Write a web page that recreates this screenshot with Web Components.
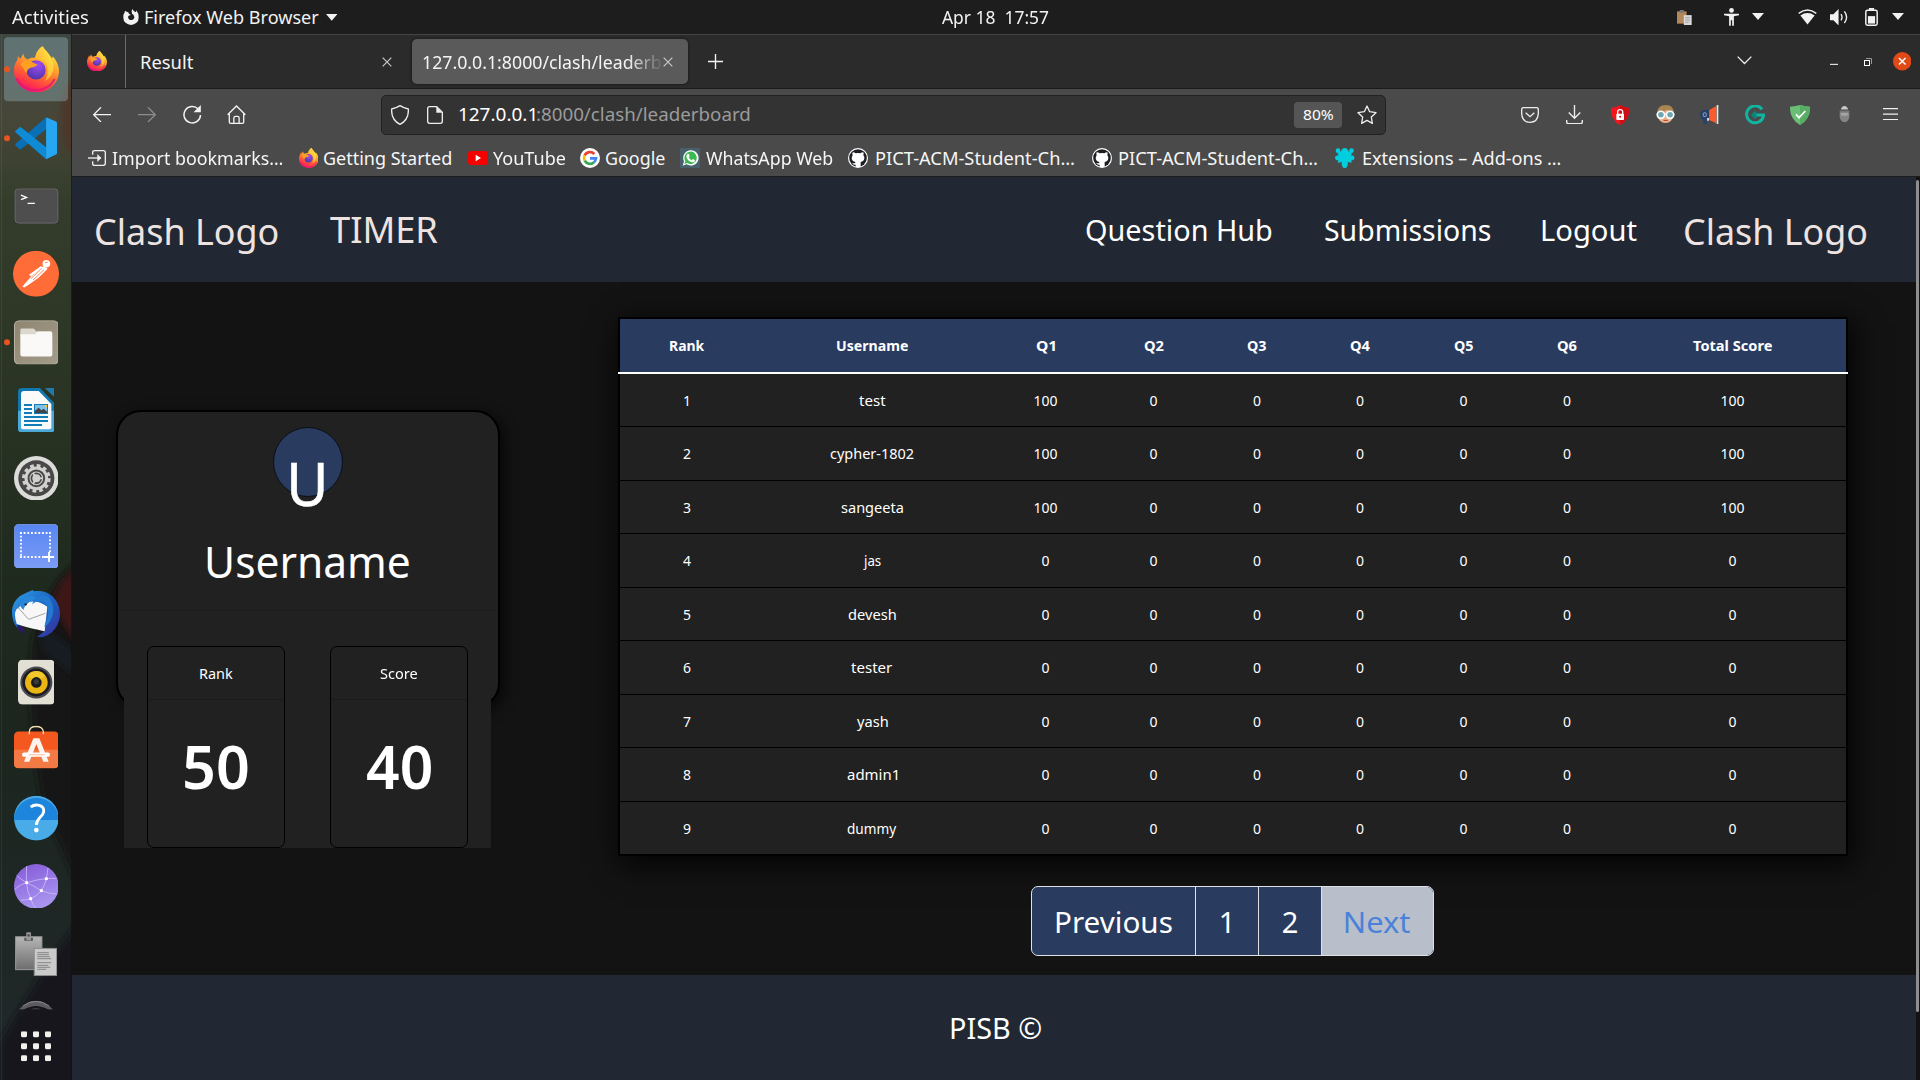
<!DOCTYPE html>
<html lang="en">
<head>
<meta charset="utf-8">
<title>Leaderboard</title>
<style>
html,body{margin:0;height:100%;background:#131313;overflow:hidden}
body{font-family:"Noto Sans","Open Sans",sans-serif;color:#fff}
</style>
</head>
<body>
<desktop-shell>
  <top-panel slot="panel"></top-panel>
  <app-dock slot="dock"></app-dock>
  <browser-window>
    <tab-strip slot="chrome"></tab-strip>
    <nav-toolbar slot="chrome"></nav-toolbar>
    <bookmark-bar slot="chrome"></bookmark-bar>
    <leader-page></leader-page>
  </browser-window>
</desktop-shell>
<script>
const ICONS = {
firefox:['0 0 135 138',`<defs><linearGradient id="a" x1=".75" y1="0" x2=".3" y2="1"><stop offset="0" stop-color="#fff44f"/><stop offset=".3" stop-color="#ffb62e"/><stop offset=".6" stop-color="#ff6a30"/><stop offset=".85" stop-color="#ff2f4e"/><stop offset="1" stop-color="#e8187c"/></linearGradient><radialGradient id="b" cx=".6" cy=".25" r=".8"><stop offset="0" stop-color="#a14cf5"/><stop offset="1" stop-color="#4a35a5"/></radialGradient><linearGradient id="c" x1="1" y1="0" x2="0" y2="1"><stop offset="0" stop-color="#fff04a"/><stop offset="1" stop-color="#ff9a28"/></linearGradient></defs>
<path fill="url(#a)" d="M86 0C91 10 104 20 111 33C113 36 115 38 116 30C127 42 135 58 135 74C135 110 105 138 67 138C29 138 0 110 0 74C0 60 4 48 10 42L12 30L19 38L28 22C29 32 34 38 42 40C52 30 62 38 64 32C66 18 76 6 86 0Z"/>
<path fill="url(#c)" d="M86 0C91 12 106 22 113 38C124 62 118 92 92 104C104 88 104 62 92 46C84 38 72 40 64 34C66 18 76 6 86 0Z"/>
<circle cx="66" cy="71" r="29" fill="url(#b)"/>
<path fill="#ffa023" d="M19 56C24 44 38 38 50 44C56 48 62 52 70 54C68 60 60 63 52 64C44 66 38 72 38 80C30 74 30 64 19 56Z"/>
<path fill="none" stroke="#e2147a" stroke-width="7" opacity=".75" d="M8 96C22 128 60 138 88 128C104 122 116 110 122 98"/>`],
vscode:['0 0 127 127',`<path fill="#0a6fb5" d="M0 84L14 97Q17 98 19 96L94 36V0L2 80Q0 82 0 84Z"/><path fill="#0f8ad4" d="M0 42L14 30Q17 28 19 31L94 91V127L2 46Q0 44 0 42Z"/><path fill="#27a7f2" d="M94 0L124 13Q127 15 127 18V108Q127 112 124 113L94 127Z"/>`],
terminal:['0 0 136 110',`<rect x="1" y="1" width="134" height="108" rx="12" fill="#2b2b2b"/><rect x="3" y="2" width="130" height="104" rx="10" fill="#4e4e4e" stroke="#7d7d7d" stroke-width="2"/><path d="M21 21L38 28L21 35" fill="none" stroke="#fff" stroke-width="4"/><path d="M41 46H63" stroke="#fff" stroke-width="3.5"/>`],
postman:['0 0 138 138',`<circle cx="69" cy="69" r="69" fill="#ff6c37"/><circle cx="100" cy="39" r="11.5" fill="#fff"/><path fill="#fff" d="M92 45L104 54L76 82L48 101L34 110L28 108L36 98L52 80Z"/><path d="M96 36L104 34M86 52L54 84M93 57L60 88" stroke="#ff6c37" stroke-width="2.5"/><path fill="#fff" d="M48 72L84 46L88 50L54 77Z"/>`],
files:['0 0 134 134',`<defs><linearGradient id="a" x1="0" y1="0" x2="1" y2="1"><stop offset="0" stop-color="#8f8671"/><stop offset="1" stop-color="#a39b8a"/></linearGradient></defs><rect x="1.5" y="1.5" width="131" height="131" rx="14" fill="url(#a)" stroke="#b9b1a1" stroke-width="3"/><path d="M19 40V29Q19 25 23 25H57Q60 25 62 28L67 34H113V50H19Z" fill="#dcd8ce"/><path d="M19 42H64L70 34H109Q115 34 115 40V103Q115 109 109 109H25Q19 109 19 103Z" fill="#faf9f7"/>`],
writer:['0 0 110 134',`<path d="M12 0H66L110 46V122Q110 133 98 133H12Q0 133 0 122V12Q0 0 12 0Z" fill="#1277ae"/><path d="M0 68H110V122Q110 133 98 133H12Q0 133 0 122Z" fill="#4aa9d8"/><path d="M18 9H62L100 48V118Q100 124 94 124H16Q9 124 9 118V18Q9 9 18 9Z" fill="#fafafa"/><path d="M80 0H106Q110 0 110 4V28Z" fill="#2378ab"/><path d="M18 51H42M18 63H42M18 75H42M18 87H90M18 99H90M18 111H72" stroke="#0e7db8" stroke-width="5.5"/><rect x="48" y="48" width="42" height="30" fill="#0e7db8"/><rect x="51" y="51" width="36" height="24" fill="#7ec2e8"/><path d="M51 75V68L62 59L70 67L77 62L87 71V75Z" fill="#444"/><path d="M78 51H87V60Z" fill="#ffc63a"/>`],
settings:['0 0 134 134',`<circle cx="67" cy="67" r="67" fill="#dcdcda"/><circle cx="67" cy="67" r="54" fill="#484848"/><circle cx="67" cy="67" r="38" fill="none" stroke="#d0d0ce" stroke-width="10" stroke-dasharray="11 8.9"/><circle cx="67" cy="67" r="31" fill="none" stroke="#d0d0ce" stroke-width="9"/><circle cx="67" cy="67" r="19" fill="none" stroke="#d0d0ce" stroke-width="3"/><path d="M67 67L86 67M67 67L57 51M67 67L57 84" stroke="#d0d0ce" stroke-width="6"/><circle cx="67" cy="67" r="12" fill="#d0d0ce"/>`],
shot:['0 0 134 134',`<defs><linearGradient id="a" x1="0" y1="0" x2="0" y2="1"><stop offset="0" stop-color="#5886f2"/><stop offset="1" stop-color="#7c9cf6"/></linearGradient></defs><rect x="1" y="1" width="132" height="132" rx="13" fill="url(#a)" stroke="#8eaaf8" stroke-width="2"/><path d="M18 27H110M108 24V86M21 24V102M18 99H92" stroke="#fff" stroke-width="5.5" stroke-dasharray="5.5 5.5" fill="none"/><path d="M90 99H120M105 84V114" stroke="#fff" stroke-width="5.5"/>`],
tbird:['0 0 144 142',`<defs><linearGradient id="a" x1="0" y1="0" x2="1" y2="1"><stop offset="0" stop-color="#2fa0e8"/><stop offset=".5" stop-color="#1a62c0"/><stop offset="1" stop-color="#3a2c9c"/></linearGradient></defs><path fill="url(#a)" d="M48 6L62 0L66 4C110 -4 144 30 144 72C144 104 122 136 88 142L74 140C88 134 94 126 100 120L20 104L38 128C10 118 0 92 0 66C0 44 12 26 28 16Z"/><path d="M28 46C50 30 80 30 106 50L98 124C70 118 30 108 14 102Q4 70 14 58Z" fill="#f7f7f8"/><path d="M16 50L50 88L100 70" fill="none" stroke="#777" stroke-width="2"/><path d="M26 50C24 24 50 12 74 22C62 34 42 36 34 60Z" fill="#2a86d8"/><path d="M60 44C70 30 104 26 108 60C112 80 96 100 98 112C126 90 132 50 112 24C96 8 70 16 60 44Z" fill="#2378cf"/><path d="M14 104C18 124 28 126 38 130L34 112Z" fill="#2c1769"/><circle cx="41" cy="43" r="3.5" fill="#222"/>`],
rhythm:['0 0 110 134',`<rect width="110" height="134" rx="13" fill="#e2dfd5"/><circle cx="55" cy="68" r="48" fill="#4a4a50"/><circle cx="55" cy="68" r="42" fill="#1c1c22"/><circle cx="55" cy="68" r="34" fill="#e9b613"/><path d="M55 68L28 47A34 34 0 0 1 82 47Z" fill="#f7d33c" opacity=".6"/><circle cx="55" cy="68" r="16" fill="#1b1b1b"/><circle cx="55" cy="66" r="8" fill="#3a3a3a"/>`],
software:['0 0 134 128',`<rect y="18" width="134" height="110" rx="13" fill="#f4581f"/><path d="M0 73H134V115Q134 128 121 128H13Q0 128 0 115Z" fill="#f47a45"/><path d="M46 26V18Q47 3 66 3Q86 3 88 18V26" fill="none" stroke="#f3dfae" stroke-width="4"/><path d="M58 38H76L104 109H88L67 56L46 109H30Z" fill="#fff" opacity=".92"/><rect x="24" y="81" width="84" height="13" rx="6.500" fill="#fff"/><path d="M44 88H92" stroke="#f9b89e" stroke-width="3"/>`],
help:['0 0 134 134',`<circle cx="67" cy="67" r="67" fill="#4aabe9"/><path d="M0 73A67 67 0 1 1 134 73Z" fill="#1e85dc"/><path d="M50 34C62 24 92 25 89 48C87 64 67 66 67 88" fill="none" stroke="#fff" stroke-width="8.500"/><circle cx="67" cy="103" r="7" fill="#fff"/>`],
net:['0 0 134 134',`<defs><linearGradient id="a" x1="0" y1="0" x2=".4" y2="1"><stop offset="0" stop-color="#8457d8"/><stop offset="1" stop-color="#a794ef"/></linearGradient></defs><circle cx="67" cy="67" r="67" fill="url(#a)"/><g fill="none" stroke="#cdb9f5" stroke-width="2.500"><path d="M38 6Q36 30 38 56Q38 80 50 104Q56 124 66 133M8 34Q22 48 38 56Q60 66 82 80Q106 90 130 90M2 76Q20 60 38 56Q70 46 97 44Q116 42 128 44M102 12Q100 28 97 44Q92 64 82 80Q70 96 50 104Q30 110 20 108"/></g><g fill="#fff"><circle cx="38" cy="56" r="5"/><circle cx="97" cy="44" r="5"/><circle cx="82" cy="80" r="5"/><circle cx="50" cy="104" r="5"/></g>`],
clip:['0 0 128 132',`<defs><linearGradient id="a" x1="0" y1="0" x2="0" y2="1"><stop offset="0" stop-color="#b5b5b5"/><stop offset="1" stop-color="#6e6e6e"/></linearGradient></defs><rect x="2" y="14" width="79" height="99" fill="url(#a)" stroke="#9b9b9b" stroke-width="3"/><rect x="28" y="17" width="26" height="9" fill="#555"/><rect x="34" y="0" width="14" height="24" fill="#9a9a9a"/><circle cx="41" cy="10" r="4" fill="#555"/><rect x="58" y="49" width="68" height="82" fill="#cacaca" stroke="#8b8b8b" stroke-width="3"/><path d="M67 62H102M67 68H102M67 74H105M67 80H109M67 92H109M67 100H100M67 106H106M67 112H94" stroke="#858585" stroke-width="3"/>`],
peek:['0 0 104 27',`<path d="M0 27Q24 0 52 0Q80 0 104 27H90Q70 16 52 16Q34 16 14 27Z" fill="#5c5c60"/><path d="M12 16Q30 2 52 2Q74 2 92 16" fill="none" stroke="#8a8a8c" stroke-width="3"/><path d="M36 27Q50 18 68 27Z" fill="#3c3c40"/>`],
grid:['0 0 90 90',`<g fill="#f2f1ee"><rect width="18" height="18" rx="4"/><rect x="36" width="18" height="18" rx="4"/><rect x="72" width="18" height="18" rx="4"/><rect y="36" width="18" height="18" rx="4"/><rect x="36" y="36" width="18" height="18" rx="4"/><rect x="72" y="36" width="18" height="18" rx="4"/><rect y="72" width="18" height="18" rx="4"/><rect x="36" y="72" width="18" height="18" rx="4"/><rect x="72" y="72" width="18" height="18" rx="4"/></g>`],
ffmono:['0 0 48 48',`<path fill="#f2f2f2" d="M28 0Q31 7 39 10L40 4Q48 14 47 26A23 22 0 0 1 1 26Q0 17 5 10L6 5L11 8Q17 8 18 14L24 18Q17 19 15 23Q16 33 25 33Q34 32 34 24Q33 17 27 14Q24 6 28 0Z"/>`],
tri:['0 0 34 20',`<path fill="#f2f2f2" d="M0 0H34L17 20Z"/>`],
clipS:['0 0 44 44',`<rect x="0" y="4" width="28" height="36" fill="#b2885a"/><rect x="8" y="0" width="12" height="8" fill="#777"/><rect x="20" y="15" width="23" height="29" fill="#d9d9d9"/><path d="M24 22H38M24 27H38M24 32H38M24 37H34" stroke="#999" stroke-width="2"/>`],
access:['0 0 44 54',`<g fill="#f2f2f2"><circle cx="22" cy="7" r="7"/><path d="M0 17H44V21L29 24V52H24V36H20V52H15V24L0 21Z"/></g>`],
wifi:['0 0 56 46',`<path fill="#f2f2f2" d="M7 19Q28 5 49 19L28 46Z"/><path d="M2 13Q28-7 54 13" fill="none" stroke="#f2f2f2" stroke-width="4"/>`],
vol:['0 0 54 48',`<path fill="#f2f2f2" d="M0 15H10L25 0V48L10 33H0Z"/><path d="M32 15Q38 24 32 33M42 7Q55 24 42 41" fill="none" stroke="#f2f2f2" stroke-width="4"/>`],
batt:['0 0 40 56',`<rect x="2.500" y="7" width="35" height="46" rx="5" fill="none" stroke="#f2f2f2" stroke-width="4.500"/><rect x="12" y="0" width="16" height="6" fill="#f2f2f2"/><rect x="9" y="25" width="22" height="23" fill="#f2f2f2"/>`],
x:['0 0 30 30',`<path d="M2 2L28 28M28 2L2 28" stroke="#c9c9c9" stroke-width="3.500"/>`],
plus:['0 0 44 44',`<path d="M22 0V44M0 22H44" stroke="#f4f4f4" stroke-width="4"/>`],
chev:['0 0 46 26',`<path d="M2 2L23 23L44 2" fill="none" stroke="#f0f0f0" stroke-width="4"/>`],
min:['0 0 24 24',`<path d="M0 19H24" stroke="#fff" stroke-width="3"/>`],
max:['0 0 24 24',`<rect x="1.500" y="7.500" width="15" height="15" fill="none" stroke="#fff" stroke-width="3"/><path d="M6 1.500H22.500V18" fill="none" stroke="#999" stroke-width="3"/>`],
close:['0 0 56 56',`<circle cx="28" cy="28" r="28" fill="#df4a16"/><path d="M18 18L38 38M38 18L18 38" stroke="#fff" stroke-width="4.500"/>`],
back:['0 0 54 46',`<path d="M24 1L2 23L24 45M2 23H54" fill="none" stroke="#f4f4f4" stroke-width="4"/>`],
fwd:['0 0 54 46',`<path d="M30 1L52 23L30 45M52 23H0" fill="none" stroke="#8d8d8d" stroke-width="4"/>`],
reload:['0 0 56 56',`<path d="M46 12A25 25 0 1 0 53 30" fill="none" stroke="#f4f4f4" stroke-width="4.500"/><path d="M54 0V22H32Z" fill="#f4f4f4"/>`],
home:['0 0 58 58',`<path d="M2 30L29 3L56 30M7 26V52Q7 56 11 56H47Q51 56 51 52V26M21 56V40Q21 35 26 35H32Q37 35 37 40V56" fill="none" stroke="#f4f4f4" stroke-width="4"/>`],
shield:['0 0 54 60',`<path d="M27 2Q38 9 52 12Q54 44 27 58Q0 44 2 12Q16 9 27 2Z" fill="none" stroke="#ededed" stroke-width="4" stroke-linejoin="round"/>`],
doc:['0 0 48 54',`<path d="M8 2H29L46 19V46Q46 52 40 52H8Q2 52 2 46V8Q2 2 8 2Z" fill="none" stroke="#ededed" stroke-width="4"/><path d="M28 2L46 20H28Z" fill="#ededed"/>`],
star:['0 0 60 58',`<path d="M30 3L38 20L57 23L43 36L46 55L30 46L14 55L17 36L3 23L22 20Z" fill="none" stroke="#ededed" stroke-width="4" stroke-linejoin="round"/>`],
pocket:['0 0 54 48',`<path d="M7 2H47Q52 2 52 8V20Q50 46 27 46Q4 46 2 20V8Q2 2 7 2Z" fill="none" stroke="#ededed" stroke-width="4"/><path d="M14 17L27 29L40 17" fill="none" stroke="#ededed" stroke-width="4"/>`],
down:['0 0 50 58',`<path d="M25 0V38M8 22L25 39L42 22M2 44V50Q2 55 8 55H42Q48 55 48 50V44" fill="none" stroke="#ededed" stroke-width="4"/>`],
lock:['0 0 54 60',`<path d="M27 0Q38 8 54 9Q56 45 27 60Q-2 45 0 9Q16 8 27 0Z" fill="#f4141c"/><path d="M27 0Q38 8 54 9Q56 45 27 60Z" fill="#d10d14"/><rect x="16" y="26" width="23" height="19" rx="2" fill="#fff"/><path d="M20 27V20Q20 14 27.500 14Q35 14 35 20V27" fill="none" stroke="#fff" stroke-width="4"/><circle cx="27.500" cy="35" r="3" fill="#d10d14"/>`],
face:['0 0 58 56',`<ellipse cx="29" cy="31" rx="24" ry="24" fill="#e9b28a"/><path d="M3 27Q3 0 30 0Q55 0 55 27Q40 24 34 14Q24 24 3 27Z" fill="#a98552"/><path d="M2 28H56" stroke="#f7f7f7" stroke-width="4"/><circle cx="15" cy="30" r="11" fill="#6ea5ae" stroke="#fff" stroke-width="5"/><circle cx="43" cy="30" r="11" fill="#6ea5ae" stroke="#fff" stroke-width="5"/><path d="M23 47H36" stroke="#b23c2a" stroke-width="3"/>`],
mega:['0 0 58 60',`<path d="M28 14V48L20 46L22 60H12L8 44Q0 40 0 30Q0 18 10 16Z" fill="#29406a"/><path d="M28 15L50 3V56L28 46Z" fill="#fb5c2d"/><rect x="51" y="0" width="5" height="60" fill="#dfe9f2"/><rect x="10" y="24" width="9" height="11" rx="2" fill="none" stroke="#aab6ca" stroke-width="2.500"/><rect x="22" y="40" width="5" height="8" fill="#fff"/>`],
gram:['0 0 60 60',`<path d="M51 13A25.500 25.500 0 1 0 55.500 32" fill="none" stroke="#0fb5a0" stroke-width="9"/><path d="M32 30H60" stroke="#0fb5a0" stroke-width="9" fill="none"/><path d="M18 30L30 17L37 25H34V35H37L30 43Z" fill="#08877b"/>`],
guard:['0 0 60 60',`<path d="M30 0Q42 4 60 5Q62 42 30 60Q-2 42 0 5Q18 4 30 0Z" fill="#69bf75"/><path d="M30 0Q42 4 60 5Q62 42 30 60Z" fill="#58ad65"/><path d="M18 28L27 38L46 18" fill="none" stroke="#fff" stroke-width="5"/>`],
bug:['0 0 34 50',`<path d="M6 11Q8 0 17 0Q26 0 28 11Z" fill="#c8c8c8"/><rect x="2" y="14" width="30" height="5" fill="#777"/><path d="M2 20H32V32Q30 50 17 50Q4 50 2 32Z" fill="#858585"/><path d="M4 20H30L26 30H8Z" fill="#a4a4a4"/>`],
menu:['0 0 46 38',`<path d="M0 2H46M0 19H46M0 36H46" stroke="#f0f0f0" stroke-width="4"/>`],
imp:['0 0 54 48',`<path d="M14 14V7Q14 2 20 2H46Q52 2 52 8V40Q52 46 46 46H20Q14 46 14 41V34" fill="none" stroke="#f0f0f0" stroke-width="4"/><path d="M0 24H38" stroke="#f0f0f0" stroke-width="4"/><path d="M28 12L40 24L28 36Z" fill="#f0f0f0"/>`],
yt:['0 0 60 42',`<rect width="60" height="42" rx="9" fill="#f60000"/><path d="M23 11L39 21L23 31Z" fill="#fff"/>`],
google:['0 0 60 60',`<circle cx="30" cy="30" r="30" fill="#fff"/><g fill="none" stroke-width="8"><path d="M43 18A18 18 0 0 0 14 22" stroke="#ea4335"/><path d="M14 22A18 18 0 0 0 14 38" stroke="#fbbc05"/><path d="M14 38A18 18 0 0 0 42 43" stroke="#34a853"/><path d="M42 43Q47 38 48 31H30" stroke="#4285f4"/></g>`],
wa:['0 0 60 60',`<rect width="60" height="60" fill="#48606c"/><path d="M8 53L12 40A23 23 0 1 1 20 49Z" fill="#fff"/><path d="M13 48L16 39A18.500 18.500 0 1 1 22 45Z" fill="#3cb950"/><path d="M22 18L27 18L29 25L26 28Q29 34 35 37L39 33L45 37Q44 44 37 43Q20 39 19 24Z" fill="#fff"/>`],
gh:['0 0 60 60',`<circle cx="30" cy="30" r="30" fill="#fff"/><circle cx="30" cy="30" r="26.500" fill="#1b1f23"/><path d="M14 13Q20 13 23 16Q30 14 37 16Q40 13 46 13Q48 18 46 22Q50 26 49 31Q48 41 38 42V57H23V50Q15 52 12 44Q18 47 22 44V42Q12 40 11 31Q11 26 14 22Q12 18 14 13Z" fill="#fff"/>`],
ext:['0 0 58 60',`<g fill="#00cddd"><circle cx="9" cy="8" r="7"/><circle cx="49" cy="8" r="7"/><path d="M8 14L18 10L20 5Q22 0 29 0Q36 0 38 5L40 10L50 14L48 23Q58 21 58 30Q57 37 48 37L50 44L38 42L38 50Q36 60 29 60Q22 60 20 50L20 42L8 44L10 37Q1 37 0 30Q0 21 10 23Z"/></g>`]
};
const el = (name, html, extra) => customElements.define(name, class extends HTMLElement {
  constructor(){ super(); this.attachShadow({mode:'open'}); }
  connectedCallback(){ if(this.done) return; this.done = true;
    this.shadowRoot.innerHTML = typeof html === 'function' ? html(this) : html;
    if(extra) extra(this); }
});
const pen = document.createElement('canvas').getContext('2d');

/* A single line of text whose ink is stretched to the width "w" at font size "s". */
el('fit-text', h => `<style>:host{display:block;flex:none;white-space:pre;line-height:1.3;font-size:${h.getAttribute('s')||17.5}px}span{display:inline-block;transform-origin:0 50%}</style><span><slot></slot></span>`, h => {
  const s = h.getAttribute('s')||17.5, w = +h.getAttribute('w'), dy = +(h.getAttribute('dy')||0);
  const span = h.shadowRoot.querySelector('span');
  if(!w){ span.style.transform = `translateY(${dy}px)`; return; }
  pen.font = `${h.getAttribute('b')||400} ${s}px "Noto Sans"`;
  h.style.fontWeight = h.getAttribute('b')||400;
  const m = pen.measureText(h.textContent), k = w/(m.actualBoundingBoxLeft+m.actualBoundingBoxRight);
  h.style.width = w+'px';
  span.style.transform = `translate(${m.actualBoundingBoxLeft*k}px,${dy}px) scaleX(${k})`;
});
el('ui-icon', h => { const [vb, body] = ICONS[h.getAttribute('n')], v = vb.split(' '), w = +(h.getAttribute('w') || v[2]/3);
  return `<style>:host{display:block;flex:none;width:${w}px;height:${w*v[3]/v[2]}px}svg{display:block;width:100%;height:100%}</style><svg viewBox="${vb}">${body}</svg>`; });

el('desktop-shell', `<style>:host{display:grid;grid-template:34px 1046px/72px 1848px;width:1920px;height:1080px;overflow:hidden}
.p{grid-column:1/3}</style><div class="p"><slot name="panel"></slot></div><slot name="dock"></slot><slot></slot>`);

const at = (list) => { let x = 0, out = ''; for(const [pos, w, node] of list){ out += `<div class="i" style="margin-left:${(pos-x).toFixed(1)}px;width:${w}px">${node}</div>`; x = pos+w; } return out; };
const bar = `.i{flex:none;display:flex;justify-content:flex-start;align-items:center}`;
const T = (x,w,t,s=17.5,dy=0,b='') => [x,w,`<fit-text w="${w}" s="${s}" dy="${dy}" ${b}>${t}</fit-text>`];
const I = (x,w,n,dy=0) => [x,w,`<ui-icon n="${n}" w="${w}" style="margin-top:${dy}px"></ui-icon>`];

el('top-panel', `<style>:host{display:flex;align-items:center;height:34px;background:#1d1d1d;color:#f2f2f2}${bar}</style>`+at([
 T(12,76.500,'Activities'),I(123,16,'ffmono'),T(145,173.500,'Firefox Web Browser'),I(325.500,11.500,'tri',1),
 T(942,107,'Apr 18\u00a0 17:57'),I(1676.500,15,'clipS'),I(1723.500,15,'access'),I(1752,12,'tri'),I(1797.500,19,'wifi'),I(1830,18.500,'vol'),I(1864.500,13,'batt'),I(1892,12,'tri')]));

el('tab-strip', `<style>:host{display:flex;align-items:center;height:55px;box-sizing:border-box;border-top:1px solid #434343;border-bottom:1px solid #1b1b1b;background:#2b2b2b;color:#f4f4f4}
${bar}.pin{width:53px;height:53px;border-right:1px solid #6a6a6a;display:flex;align-items:center}.pin ui-icon{margin:-1px 0 0 15px}
.tab{display:flex;align-items:center;box-sizing:border-box;height:45px;width:276px;padding-left:11px;border-radius:5px;background:#5a5a5a;box-shadow:0 0 3px #111}
.fade{width:239px;overflow:hidden;-webkit-mask:linear-gradient(90deg,#000 205px,transparent 241px)}</style>
<div class="pin"><ui-icon n="firefox" w="20"></ui-icon></div>
<fit-text w="52" style="margin-left:15px" dy="1">Result</fit-text><ui-icon n="x" w="10" style="margin-left:188.500px"></ui-icon>
<div class="tab" style="margin-left:20px"><div class="fade"><fit-text w="238" dy="1">127.0.0.1:8000/clash/leaderb</fit-text></div><ui-icon n="x" w="10" style="margin-left:1px"></ui-icon></div>
<ui-icon n="plus" w="15" style="margin-left:20px"></ui-icon>
<ui-icon n="chev" w="15" style="margin-left:1014px;margin-top:-2px"></ui-icon>
<ui-icon n="min" w="8" style="margin-left:78px"></ui-icon><ui-icon n="max" w="8" style="margin-left:26px"></ui-icon><ui-icon n="close" w="18.500" style="margin-left:21px"></ui-icon>`);

el('nav-toolbar', `<style>:host{display:flex;align-items:center;height:51px;background:#4a4a4a;color:#fff}${bar}
.url{flex:none;box-sizing:border-box;display:flex;align-items:center;width:1005px;height:40px;margin-left:135px;border:1px solid #222;border-radius:5px;background:#333}
.zoom{display:flex;align-items:center;justify-content:center;width:48px;height:26px;margin-left:544px;border-radius:4px;background:#555}
.path{color:#9b9b9b}.ext{display:flex;align-items:center}</style>`+at([I(21,18,'back'),I(66,18,'fwd'),I(111,18.500,'reload'),I(155,19,'home')])+
`<div class="url"><ui-icon n="shield" w="18" style="margin-left:9px"></ui-icon><ui-icon n="doc" w="16" style="margin-left:18px"></ui-icon>
<fit-text w="76" s="17.5" style="margin-left:16px">127.0.0.1</fit-text><fit-text class="path" w="213" s="17.5" style="margin-left:2px">:8000/clash/leaderboard</fit-text>
<div class="zoom"><fit-text w="30" s="14" dy=".5">80%</fit-text></div><ui-icon n="star" w="20" style="margin-left:15px"></ui-icon></div>`+
`<div class="ext">`+at([I(135,18,'pocket'),I(180,17,'down'),I(225,18,'lock'),I(269.500,19,'face'),I(314,19,'mega'),I(359,20,'gram'),I(404,20,'guard'),I(453,11,'bug'),I(497,15,'menu',-1)])+`</div>`);

el('bookmark-bar', `<style>:host{display:flex;align-items:center;height:37px;box-sizing:border-box;border-bottom:1px solid #1d1d1d;background:#4a4a4a;color:#f6f6f6}${bar}</style>`+at([
 I(16,18,'imp'),T(40,170.500,'Import bookmarks…'),I(226.500,19.500,'firefox'),T(252,127.500,'Getting Started'),I(396,20,'yt'),T(420.500,72,'YouTube'),
 I(508,20,'google'),T(533.500,58.500,'Google'),I(608,20,'wa'),T(634,126.500,'WhatsApp Web'),I(776,20,'gh'),T(803.500,198,'PICT-ACM-Student-Ch…'),
 I(1020,20,'gh'),T(1047,198,'PICT-ACM-Student-Ch…'),I(1263,19.500,'ext'),T(1291,197.500,'Extensions – Add-ons …')]));

el('browser-window', `<style>:host{display:flex;flex-direction:column;width:1848px;height:1046px}</style><slot name="chrome"></slot><slot></slot>`);

el('app-dock', () => { const items = [['firefox',45,69],['vscode',42,138],['terminal',45,206],['postman',46,273.5],['files',44.7,342],['writer',36.7,410],['settings',44.7,478],['shot',44.7,546],['tbird',48,614],['rhythm',36.7,682],['software',44.7,747],['help',44.7,818],['net',44.7,886],['clip',42.5,954],['peek',34,1005.5],['grid',30,1046]];
 let rows = ''; items.forEach(([n,w,c],i) => { const end = i<items.length-1 ? (c+items[i+1][2])/2 : 1080, start = i ? (items[i-1][2]+c)/2 : 34;
   rows += `<div class="c ${i==0?'on':''} ${[0,1,4].includes(i)?'run':''}" style="height:${end-start}px"><span style="transform:translateY(${c-(start+end)/2}px)"><i></i><b><ui-icon n="${n}" w="${w}"></ui-icon></b></span></div>`; });
 return `<style>:host{display:grid;height:1046px;overflow:hidden;background:#1d2420}svg,.l{grid-area:1/1}svg{display:block}
 .c{display:flex;align-items:center}.c span{display:flex;align-items:center;width:72px}
 b{display:flex;align-items:center;justify-content:center;width:64px}i{flex:none;width:6px;height:6px;margin:0 -6px 0 4px;border-radius:50%;z-index:1}.run i{background:#e95420}
 .on b{height:64px;border-radius:4px;background:rgba(165,200,210,.34)}</style>
 <svg width="72" height="1046" viewBox="0 34 72 1046"><defs><linearGradient id="g" x1="0" y1="0" x2="0" y2="1"><stop offset="0" stop-color="#3d4742"/><stop offset=".08" stop-color="#474739"/><stop offset=".16" stop-color="#343d2b"/><stop offset=".35" stop-color="#2a3424"/><stop offset=".5" stop-color="#202b1f"/><stop offset=".65" stop-color="#1c261e"/><stop offset="1" stop-color="#20282a"/></linearGradient><filter id="f" x="-50%" y="-50%" width="200%" height="200%"><feGaussianBlur stdDeviation="3"/></filter></defs>
 <rect y="34" width="72" height="1046" fill="url(#g)"/><ellipse cx="74" cy="118" rx="14" ry="38" fill="#4c392b" filter="url(#f)"/>
 <path d="M80 560Q40 590 32 650Q28 740 44 810L80 890Z" fill="#151616" filter="url(#f)"/><path d="M80 565Q56 580 52 605L80 650Z" fill="#3c1518" filter="url(#f)"/><path d="M40 625L80 655V680L42 650Z" fill="#191e24" filter="url(#f)"/>
 <path d="M80 920L50 960L0 1042V1090H80Z" fill="#17181c" filter="url(#f)"/><path d="M1.500 34V1080" stroke="#fff" opacity=".06" stroke-width="1"/><path d="M71.500 34V1080" stroke="#111" opacity=".7"/></svg><div class="l">${rows}</div>`; });

el('leader-page', `<style>:host{display:grid;grid-template:903px/1844px 4px;height:903px;background:#131313}
.col{display:flex;flex-direction:column;overflow:hidden}main{display:flex;flex:none;height:693px}
.bar{margin-top:3px;width:3px;height:832px;border-radius:2px;background:#8e8e8e}
.right{display:flex;flex-direction:column;width:1230px;margin:35px 0 0 118.5px}</style>
<div class="col"><site-nav></site-nav><main><user-card></user-card><div class="right"><score-table></score-table><page-picker></page-picker></div></main><site-footer></site-footer></div><div class="bar"></div>`);

el('site-nav', `<style>:host{display:flex;align-items:center;flex:none;width:1848px;height:105px;background:#212833}${bar}.logo{color:#eee3e0}</style>`+at([
 [24,182,'<fit-text class="logo" w="182" s="37" dy="1.500">Clash Logo</fit-text>'],[257.500,107.500,'<fit-text class="logo" w="107.500" s="36" dy=".5">TIMER</fit-text>'],
 T(1014,186,'Question Hub',29,0),T(1252.500,165.500,'Submissions',29,0),T(1470,94.500,'Logout',29,0),
 [1612.500,181.500,'<fit-text class="logo" w="181.500" s="37" dy="1.500">Clash Logo</fit-text>']]));

el('user-card', `<style>:host{display:block;flex:none;width:384px;height:298px;box-sizing:border-box;margin:128px 0 0 43.500px;border:2px solid #000;border-radius:25px;background:#212121;box-shadow:4px 4px 14px rgba(0,0,0,.7)}
.head{display:flex;flex-direction:column;align-items:center;height:198px;border-bottom:1px solid #1c1c1c}
.av{display:flex;justify-content:center;box-sizing:border-box;width:70px;height:70px;margin-top:15px;border:1px solid #0a0f1a;border-radius:50%;background:#293b5f}
.stats{display:flex;gap:45px;box-sizing:border-box;width:367px;height:236px;margin:1px 0 0 6.500px;padding:34px 23px 0;background:#212121}
.u{-webkit-text-stroke:.6px #fff}</style>
<div class="head"><div class="av"><fit-text class="u" w="33" s="59.5" dy="15.500">U</fit-text></div><fit-text w="202" s="44" dy="1" style="margin-top:35px">Username</fit-text></div>
<div class="stats"><stat-box w="33" n="50" nw="62.500">Rank</stat-box><stat-box w="37.500" n="40" nw="64">Score</stat-box></div>`);
el('stat-box', h => `<style>:host{display:block;box-sizing:border-box;flex:none;width:138px;height:202px;border:1px solid #000;border-radius:7px;background:#212121}
.t{display:flex;align-items:center;justify-content:center;height:52px;border-bottom:1px solid #1b1b1b}.n{display:flex;align-items:center;justify-content:center;height:134px}</style>
<div class="t"><fit-text w="${h.getAttribute('w')}" s="14.5">${h.textContent}</fit-text></div><div class="n"><fit-text w="${h.getAttribute('nw')}" s="60" b="600" dy="-1">${h.getAttribute('n')}</fit-text></div>`);

const cols = 'display:grid;grid-template-columns:134px 236px 111px 105px 102px 104px 103px 104px 227px;justify-items:center;align-items:center;';
el('score-table', () => { const rows = [['test',26.5,100],['cypher-1802',84,100],['sangeeta',62,100],['jas',18.5,0],['devesh',48,0],['tester',41.5,0],['yash',31,0],['admin1',50,0],['dummy',50,0]], hs=[53,54,53,54,53,54,53,54,52];
 return `<style>:host{display:block;box-sizing:border-box;width:1230px;height:539px;border:2px solid #000;background:#212121;box-shadow:4px 7px 28px 2px rgba(0,0,0,.85)}
 .h{${cols}height:53px;background:#293b5f}.line{height:2px;margin:0 -2px;background:#fff}</style><div class="h">`+
 [['Rank',34.5],['Username',71],['Q1',19],['Q2',20],['Q3',19.5],['Q4',20],['Q5',19.5],['Q6',20],['Total Score',79]].map(([t,w])=>`<fit-text w="${w}" s="14" b="700" dy="1">${t}</fit-text>`).join('')+`</div><div class="line"></div>`+
 rows.map((r,i)=>`<score-row rank="${i+1}" user="${r[0]}" uw="${r[1]}" score="${r[2]}" style="height:${hs[i]}px;${i==8?'border:0':''}"></score-row>`).join(''); });
el('score-row', h => { const g = a => h.getAttribute(a), n = t => `<fit-text s="14" dy=".5">${t}</fit-text>`;
 return `<style>:host{${cols}box-sizing:border-box;border-bottom:1px solid #000}</style>${n(g('rank'))}<fit-text s="14" dy=".5" w="${g('uw')}">${g('user')}</fit-text>${n(g('score'))}${n(0).repeat(5)}${n(g('score'))}`; });

el('page-picker', `<style>:host{display:flex;box-sizing:border-box;width:403px;height:70px;margin:30px 0 0 413px;border:1px solid #dee2e6;border-radius:7px;background:#293b5f;overflow:hidden}
div{display:flex;align-items:center;justify-content:center;box-sizing:border-box;border-right:1px solid #dee2e6;width:63px}.p{width:164px}.n{flex:1;border:0;background:#b9bfca;color:#4a82d9}</style>
<div class="p"><fit-text w="116" s="29" dy=".5">Previous</fit-text></div><div><fit-text s="29" dy=".5">1</fit-text></div><div><fit-text s="29" dy=".5">2</fit-text></div><div class="n"><fit-text w="65" s="29" dy=".5">Next</fit-text></div>`);
el('site-footer', `<style>:host{display:flex;align-items:center;flex:none;width:1848px;height:105px;background:#212833}fit-text{margin-left:879px}</style><fit-text w="90" s="29" dy="0">PISB ©</fit-text>`);
</script>
</body>
</html>
